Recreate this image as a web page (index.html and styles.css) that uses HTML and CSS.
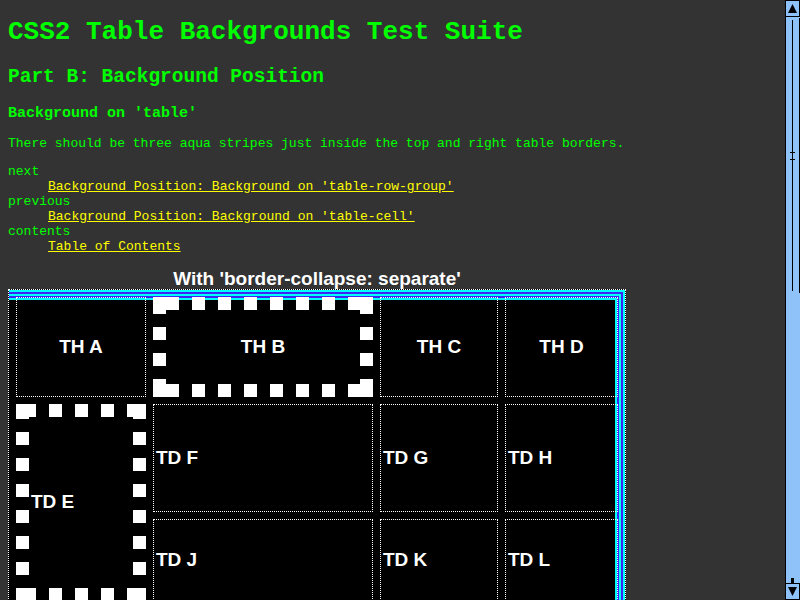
FILE: index.html
```html
<!DOCTYPE html>
<html>
<head>
<meta charset="utf-8">
<title>CSS2 Table Backgrounds Test Suite</title>
<link rel="stylesheet" href="styles.css">
</head>
<body>
<div class="page">
  <h1>CSS2 Table Backgrounds Test Suite</h1>
  <h2>Part B: Background Position</h2>
  <h3>Background on 'table'</h3>
  <p class="desc">There should be three aqua stripes just inside the top and right table borders.</p>
  <dl class="nav">
    <dt>next</dt>
    <dd><a href="#">Background Position: Background on 'table-row-group'</a></dd>
    <dt>previous</dt>
    <dd><a href="#">Background Position: Background on 'table-cell'</a></dd>
    <dt>contents</dt>
    <dd><a href="#">Table of Contents</a></dd>
  </dl>
  <table class="test">
    <caption>With 'border-collapse: separate'</caption>
    <tr class="r1">
      <th class="c1">TH A</th>
      <th class="c2 dots dots-b">TH B</th>
      <th class="c3">TH C</th>
      <th class="c4">TH D</th>
    </tr>
    <tr class="r2">
      <td class="dots dots-e" rowspan="2">TD E</td>
      <td>TD F</td>
      <td>TD G</td>
      <td>TD H</td>
    </tr>
    <tr class="r3">
      <td>TD J</td>
      <td>TD K</td>
      <td>TD L</td>
    </tr>
  </table>
</div>
<div class="sb">
  <div class="sb-btn"><svg class="sb-arrow" viewBox="0 0 9 9" width="9" height="9"><path d="M4.5 0 L9 9 L0 9 Z"/></svg></div>
  <div class="sb-track">
    <div class="sb-thumb">
      <span class="sb-line"></span>
      <span class="sb-grip g1"></span>
      <span class="sb-grip g2"></span>
    </div>
  </div>
  <div class="sb-notch"></div>
  <div class="sb-btn"><svg class="sb-arrow" viewBox="0 0 9 9" width="9" height="9"><path d="M0 0 L9 0 L4.5 9 Z"/></svg></div>
</div>
</body>
</html>
```
FILE: styles.css
```css
html {
  overflow: hidden;
  background: #333333;
}

body {
  margin: 8px 23px 8px 8px;
  color: #00ff00;
  font-family: "Liberation Mono", "Courier New", monospace;
  font-size: 13px;
  line-height: 15px;
}

h1 {
  font-size: 26px;
  line-height: 30px;
  margin: 9px 0 0;
}

h2 {
  font-size: 19.5px;
  line-height: 22px;
  margin: 19px 0 0;
}

h3 {
  font-size: 15px;
  line-height: 17px;
  margin: 17px 0 0;
}

.desc {
  margin: 14px 0 0;
}

.nav {
  margin: 13px 0 14px;
}

.nav dt {
  margin: 0;
}

.nav dd {
  margin: 0 0 0 40px;
}

.nav a {
  color: #ffff00;
  text-decoration: underline;
}

/* test table */
.test {
  --aq: #00ffff;
  --bl: #3c24f4;
  width: 618px;
  table-layout: fixed;
  border: 1px dotted #ffffff;
  border-spacing: 7px;
  background-color: #000000;
  background-image:
    linear-gradient(var(--aq), var(--aq)),
    linear-gradient(var(--aq), var(--aq)),
    linear-gradient(var(--bl), var(--bl)),
    linear-gradient(var(--bl), var(--bl)),
    linear-gradient(var(--aq), var(--aq)),
    linear-gradient(var(--aq), var(--aq)),
    linear-gradient(var(--bl), var(--bl)),
    linear-gradient(var(--bl), var(--bl)),
    linear-gradient(var(--aq), var(--aq)),
    linear-gradient(var(--aq), var(--aq));
  background-position:
    0 0, 100% 0,
    0 0, 100% 0,
    0 0, 100% 0,
    0 0, 100% 0,
    0 0, 100% 0;
  background-size:
    100% 2px, 2px 100%,
    100% 4px, 4px 100%,
    100% 6px, 6px 100%,
    100% 8px, 8px 100%,
    100% 10px, 10px 100%;
  background-repeat: no-repeat;
  font-family: "Liberation Sans", Arial, sans-serif;
  font-size: 19px;
  font-weight: bold;
  color: #ffffff;
}

.test caption {
  color: #ffffff;
  font-family: "Liberation Sans", Arial, sans-serif;
  font-size: 19px;
  line-height: 21px;
  font-weight: bold;
}

.test th,
.test td {
  box-sizing: border-box;
  border: 1px dotted #ffffff;
  padding: 1px 2px 3px;
  line-height: 21px;
  vertical-align: middle;
}

.test th {
  text-align: center;
}

.test td {
  text-align: left;
}

.test .c1 { width: 130px; }
.test .c2 { width: 220px; }
.test .c3 { width: 118px; }
.test .c4 { width: 113px; }

.test .r1 th { height: 100px; }
.test .r2 td { height: 108px; }
.test .r3 td { height: 82px; }
.test .r2 .dots-e { height: 197px; }

/* thick square-dotted cells */
.test .dots {
  --ox: 13px;
  --oy: 4px;
  border: 13px solid transparent;
  background-origin: border-box;
  background-image:
    linear-gradient(#fff, #fff),
    linear-gradient(#fff, #fff),
    linear-gradient(#fff, #fff),
    linear-gradient(#fff, #fff),
    repeating-linear-gradient(90deg, #fff 0 13px, transparent 13px 26px),
    repeating-linear-gradient(90deg, #fff 0 13px, transparent 13px 26px),
    repeating-linear-gradient(180deg, #fff 0 13px, transparent 13px 26px),
    repeating-linear-gradient(180deg, #fff 0 13px, transparent 13px 26px);
  background-position:
    0 0, 100% 0, 0 100%, 100% 100%,
    var(--ox) 0, var(--ox) 100%,
    0 var(--oy), 100% var(--oy);
  background-size:
    13px 13px, 13px 13px, 13px 13px, 13px 13px,
    calc(100% - var(--ox)) 13px, calc(100% - var(--ox)) 13px,
    13px calc(100% - var(--oy)), 13px calc(100% - var(--oy));
  background-repeat: no-repeat;
}

.test .dots-e {
  --ox: 7px;
  --oy: 2px;
}

/* scrollbar */
.sb {
  position: fixed;
  top: 0;
  right: 0;
  width: 15px;
  height: 600px;
  display: flex;
  flex-direction: column;
  background: #90c2fa;
  border-left: 1px solid #000;
  box-sizing: border-box;
}

.sb-btn {
  flex: 0 0 17px;
  box-sizing: border-box;
  border: 1px solid #000;
  margin-left: -1px;
  display: flex;
  align-items: center;
  justify-content: center;
  background: #90c2fa;
}

.sb-arrow path {
  fill: #000;
}

.sb-track {
  flex: 1 1 auto;
  display: flex;
  flex-direction: column;
  padding-top: 1px;
}

.sb-thumb {
  position: relative;
  height: 275px;
  box-sizing: border-box;
  border-right: 1px solid #000;
  margin-left: 0;
}

.sb-line {
  position: absolute;
  left: 6px;
  top: 2px;
  bottom: 2px;
  width: 1px;
  background: #000;
}

.sb-grip {
  position: absolute;
  left: 4px;
  width: 5px;
  height: 1px;
  background: #000;
}

.sb-grip.g1 { top: 134px; }
.sb-grip.g2 { top: 141px; }

.sb-notch {
  flex: 0 0 5px;
  width: 3px;
  margin-left: 5px;
  background: #000;
}
```
